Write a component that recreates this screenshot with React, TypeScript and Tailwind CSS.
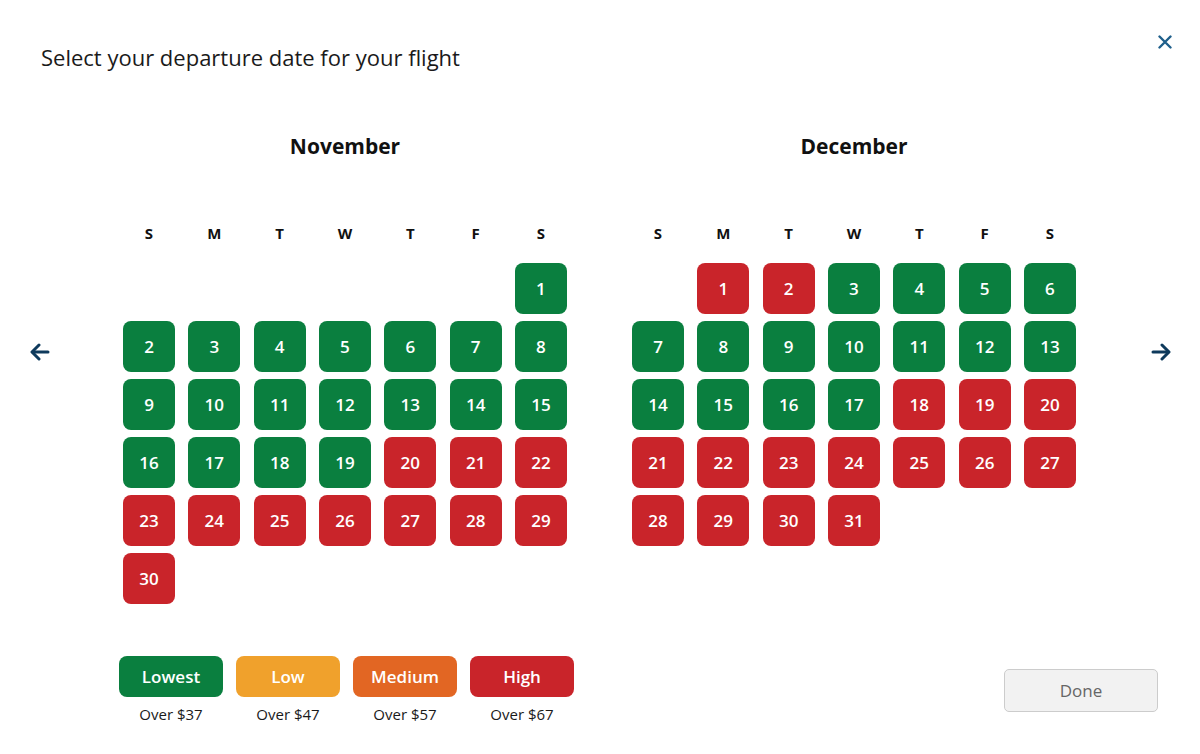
import React from "react";

type Day = { d: number; hi: boolean };

const GREEN = "bg-[#0a7f3f]";
const RED = "bg-[#c9242a]";

const november = {
  name: "November",
  offset: 6,
  days: Array.from({ length: 30 }, (_, i) => ({ d: i + 1, hi: i + 1 >= 20 })),
};

const december = {
  name: "December",
  offset: 1,
  days: Array.from({ length: 31 }, (_, i) => {
    const d = i + 1;
    return { d, hi: d <= 2 || d >= 18 };
  }),
};

const weekdays = ["S", "M", "T", "W", "T", "F", "S"];

const legend = [
  { label: "Lowest", price: "Over $37", cls: "bg-[#0a7f3f]" },
  { label: "Low", price: "Over $47", cls: "bg-[#f0a12c]" },
  { label: "Medium", price: "Over $57", cls: "bg-[#e26623]" },
  { label: "High", price: "Over $67", cls: "bg-[#c9242a]" },
];

const Month = ({ name, offset, days }: { name: string; offset: number; days: Day[] }) => (
  <div className="w-[444px] flex flex-col">
    <h2 className="text-center text-[21px] leading-[30px] font-bold text-[#111]">{name}</h2>
    <div className="mt-[62px] grid grid-cols-[repeat(7,52px)] gap-x-[13.33px]">
      {weekdays.map((w, i) => (
        <div key={i} className="text-center text-[15px] leading-[20px] font-bold text-[#111]">
          {w}
        </div>
      ))}
    </div>
    <div className="mt-[20px] grid grid-cols-[repeat(7,52px)] gap-x-[13.33px] gap-y-[7px]">
      {Array.from({ length: offset }).map((_, i) => (
        <div key={"e" + i} />
      ))}
      {days.map((day) => (
        <div
          key={day.d}
          className={`h-[51px] rounded-[8px] flex items-center justify-center text-white text-[17px] font-semibold ${
            day.hi ? RED : GREEN
          }`}
        >
          {day.d}
        </div>
      ))}
    </div>
  </div>
);

const Arrow = ({ dir }: { dir: "left" | "right" }) => (
  <svg width="20" height="18" viewBox="0 0 20 18" fill="none" stroke="#0e3a5c" strokeWidth="3" strokeLinecap="round" strokeLinejoin="round">
    {dir === "left" ? (
      <>
        <path d="M18 9H3" />
        <path d="M9 2L2 9l7 7" />
      </>
    ) : (
      <>
        <path d="M2 9h15" />
        <path d="M11 2l7 7-7 7" />
      </>
    )}
  </svg>
);

export default function App() {
  return (
    <div className="relative w-[1200px] h-[754px] bg-white flex flex-col font-['Open_Sans',sans-serif]">
      <div className="pt-[42px] pl-[41px]">
        <h1 className="text-[22px] leading-[30px] text-[#1a1a1a]">Select your departure date for your flight</h1>
      </div>
      <button className="absolute top-[35px] right-[28px] p-0">
        <svg width="14" height="14" viewBox="0 0 14 14" stroke="#1f5f8b" strokeWidth="2.4" strokeLinecap="round">
          <path d="M1.5 1.5l11 11M12.5 1.5l-11 11" />
        </svg>
      </button>

      <div className="mt-[59px] flex items-start">
        <div className="w-[123px] pl-[30px] pt-[212px]">
          <Arrow dir="left" />
        </div>
        <Month {...november} />
        <div className="w-[65px]" />
        <Month {...december} />
        <div className="pl-[75px] pt-[212px]">
          <Arrow dir="right" />
        </div>
      </div>

      <div className="mt-[52px] flex justify-between items-start pl-[119px] pr-[42px]">
        <div className="flex gap-[13px]">
          {legend.map((l) => (
            <div key={l.label} className="w-[104px] flex flex-col items-center">
              <div className={`w-full h-[41px] rounded-[8px] flex items-center justify-center text-white text-[17px] font-semibold ${l.cls}`}>
                {l.label}
              </div>
              <div className="mt-[7px] text-[15px] leading-[20px] text-[#1a1a1a]">{l.price}</div>
            </div>
          ))}
        </div>
        <button className="mt-[13px] w-[154px] h-[43px] rounded-[5px] border border-[#cccccc] bg-[#f2f2f2] text-[#666] text-[17px]">
          Done
        </button>
      </div>
    </div>
  );
}
